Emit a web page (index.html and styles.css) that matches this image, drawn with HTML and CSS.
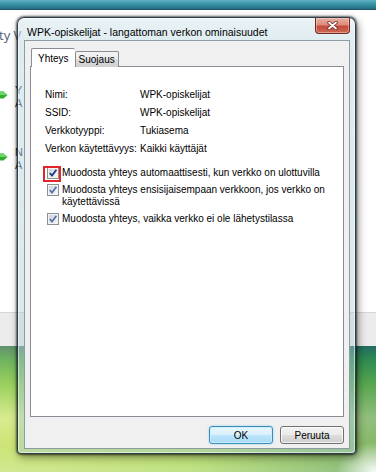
FILE: index.html
```html
<!DOCTYPE html>
<html lang="fi">
<head>
<meta charset="utf-8">
<title>WPK-opiskelijat - langattoman verkon ominaisuudet</title>
<link rel="stylesheet" href="styles.css">
</head>
<body>
<div class="desktop">
  <div class="bgwin">
    <div class="bg-title"></div>
    <div class="bg-body">
      <div class="bg-heading">ty V</div>
      <div class="bg-item">
        <svg class="arrow" width="8" height="10" viewBox="0 0 8 10"><path d="M0 1.5 H3.5 L7.5 5 L3.5 8.5 H0 Z" fill="#2fae2f"/><path d="M0 1.5 H3.5 L7.5 5 H0 Z" fill="#6fd46a"/></svg>
        <div class="bg-item-text"><span>Y</span><span>A</span></div>
      </div>
      <div class="bg-item">
        <svg class="arrow" width="8" height="10" viewBox="0 0 8 10"><path d="M0 1.5 H3.5 L7.5 5 L3.5 8.5 H0 Z" fill="#2fae2f"/><path d="M0 1.5 H3.5 L7.5 5 H0 Z" fill="#6fd46a"/></svg>
        <div class="bg-item-text"><span>N</span><span>A</span></div>
      </div>
    </div>
    <div class="bg-footer"></div>
  </div>

  <div class="dialog">
    <div class="titlebar">
      <span class="title">WPK-opiskelijat - langattoman verkon ominaisuudet</span>
      <div class="close">
        <svg width="11" height="9" viewBox="0 0 11 9"><path d="M2 1.5 L9 7.5 M9 1.5 L2 7.5" stroke="#6a2a22" stroke-width="3.4" stroke-linecap="round"/><path d="M2 1.5 L9 7.5 M9 1.5 L2 7.5" stroke="#ffffff" stroke-width="1.8" stroke-linecap="round"/></svg>
      </div>
    </div>
    <div class="client">
      <div class="tabs">
        <div class="tab active">Yhteys</div>
        <div class="tab">Suojaus</div>
      </div>
      <div class="panel">
        <div class="props">
          <span>Nimi:</span><span>WPK-opiskelijat</span>
          <span>SSID:</span><span>WPK-opiskelijat</span>
          <span>Verkkotyyppi:</span><span>Tukiasema</span>
          <span>Verkon käytettävyys:</span><span>Kaikki käyttäjät</span>
        </div>
        <div class="checks">
          <div class="check">
            <span class="box focus"><svg width="10" height="10" viewBox="0 0 10 10"><path d="M1.8 5 L4 7.6 L8.4 1.8" fill="none" stroke="#1f3c8c" stroke-width="1.9"/></svg><span class="mark"></span></span>
            <span class="label">Muodosta yhteys automaattisesti, kun verkko on ulottuvilla</span>
          </div>
          <div class="check">
            <span class="box"><svg width="10" height="10" viewBox="0 0 10 10"><path d="M1.8 5 L4 7.6 L8.4 1.8" fill="none" stroke="#5670a3" stroke-width="1.7"/></svg></span>
            <span class="label">Muodosta yhteys ensisijaisempaan verkkoon, jos verkko on<br>käytettävissä</span>
          </div>
          <div class="check">
            <span class="box"><svg width="10" height="10" viewBox="0 0 10 10"><path d="M1.8 5 L4 7.6 L8.4 1.8" fill="none" stroke="#5670a3" stroke-width="1.7"/></svg></span>
            <span class="label">Muodosta yhteys, vaikka verkko ei ole lähetystilassa</span>
          </div>
        </div>
      </div>
      <div class="buttons">
        <button class="btn default">OK</button>
        <button class="btn">Peruuta</button>
      </div>
    </div>
  </div>
</div>
</body>
</html>
```

FILE: styles.css
```css
* { box-sizing: border-box; }

html, body {
  margin: 0;
  padding: 0;
}

body {
  width: 376px;
  height: 472px;
  overflow: hidden;
  font-family: "Liberation Sans", Arial, sans-serif;
  font-size: 10px;
  color: #000;
}

.desktop {
  position: relative;
  width: 376px;
  height: 472px;
  overflow: hidden;
  background-color: #7cc447;
  background-image:
    radial-gradient(ellipse 40px 30px at 376px 472px, rgba(255,255,255,0.95), rgba(255,255,255,0)),
    linear-gradient(90deg, rgba(230,240,150,0.3) 0%, rgba(120,200,90,0.1) 50%, rgba(20,110,100,0.35) 100%),
    linear-gradient(180deg, #2a6a5e 0px, #2a6a5e 346px, #3d9a48 360px, #7cc447 385px, #d3e98c 418px, #c2df68 445px, #c9e58e 472px);
}

/* background window */
.bgwin {
  position: absolute;
  left: 0;
  top: 0;
  width: 376px;
  height: 346px;
  display: flex;
  flex-direction: column;
}

.bg-title {
  height: 10px;
  background: linear-gradient(180deg, #5eb3c2 0, #3a93a5 45%, #226f84 100%);
  border-bottom: 1px solid #244f5c;
}

.bg-body {
  flex: 1;
  background: #fff;
  padding-top: 17px;
  display: flex;
  flex-direction: column;
}

.bg-heading {
  font-family: "Open Sans", "Liberation Sans", sans-serif;
  font-size: 13px;
  line-height: 16px;
  color: #4c6078;
  margin-left: -1px;
}

.bg-item {
  display: flex;
  align-items: flex-start;
  gap: 7px;
  margin-top: 41px;
}

.bg-item + .bg-item {
  margin-top: 36px;
}

.arrow {
  margin-top: 6px;
  flex: none;
}

.bg-item-text {
  display: flex;
  flex-direction: column;
  font-size: 11px;
  line-height: 13px;
  color: #1d2a3a;
}

.bg-footer {
  height: 34px;
  background: #ececec;
  border-top: 1px solid #d6d6d6;
}

/* dialog */
.dialog {
  position: absolute;
  left: 17px;
  top: 17px;
  width: 339px;
  height: 437px;
  display: flex;
  flex-direction: column;
  padding: 0 5px 4px 6px;
  border: 1px solid rgba(25, 45, 55, 0.9);
  border-radius: 7px 7px 4px 4px;
  background:
    linear-gradient(180deg, rgba(255,255,255,0.45) 0, rgba(255,255,255,0.1) 22px, rgba(255,255,255,0) 60%),
    rgba(170, 205, 218, 0.42);
  box-shadow:
    inset 0 0 0 1px rgba(255,255,255,0.55),
    0 0 2px 1px rgba(0,0,0,0.55),
    2px 3px 9px rgba(0,0,0,0.45);
}

.titlebar {
  height: 22px;
  display: flex;
  align-items: flex-start;
}

.title {
  padding: 7px 0 0 3px;
  font-size: 10.5px;
  line-height: 14px;
  color: #000;
  white-space: nowrap;
}

.close {
  margin-left: auto;
  width: 35px;
  height: 16px;
  display: flex;
  align-items: center;
  justify-content: center;
  border: 1px solid #6e2a20;
  border-top: none;
  border-radius: 0 0 4px 4px;
  background: linear-gradient(180deg, #e9b1a6 0, #dc8b7d 45%, #c4493b 55%, #cf6a55 100%);
  box-shadow: inset 0 0 0 1px rgba(255,220,210,0.45);
}

.client {
  flex: 1;
  display: flex;
  flex-direction: column;
  padding: 7px 5px 0 5px;
  background: #f0f0f0;
  border: 1px solid #8d9ba3;
}

.tabs {
  display: flex;
  align-items: flex-end;
  height: 19px;
  margin-bottom: -1px;
  position: relative;
  z-index: 1;
}

.tab {
  height: 16px;
  padding: 0 3px;
  line-height: 15px;
  border: 1px solid #898c95;
  border-bottom: none;
  background: linear-gradient(180deg, #f3f3f3 0, #ebebeb 50%, #dddddd 50%, #cfcfcf 100%);
  border-radius: 2px 2px 0 0;
  white-space: nowrap;
}

.tab.active {
  height: 19px;
  margin-left: 1px;
  padding: 0 6px;
  line-height: 20px;
  background: #fff;
  border-right: none;
}

.panel {
  height: 351px;
  background: #fff;
  border: 1px solid #898c95;
  padding: 19px 0 0 14px;
}

.props {
  display: grid;
  grid-template-columns: 95px 1fr;
  line-height: 18px;
}

.checks {
  margin-top: 9px;
  display: flex;
  flex-direction: column;
  gap: 5px;
}

.check {
  display: flex;
  align-items: flex-start;
  line-height: 12px;
}

.box {
  position: relative;
  flex: none;
  width: 12px;
  height: 12px;
  margin: 0 3px 0 2px;
  border: 1px solid #8e8f8f;
  background: linear-gradient(135deg, #c9ced6 0, #e6e8ec 55%, #f7f7f7 100%);
  box-shadow: inset 0 0 0 1px #f4f4f4;
  display: flex;
  align-items: center;
  justify-content: center;
}

.box svg {
  display: block;
}

.box.focus .mark {
  position: absolute;
  left: -5px;
  top: -2px;
  width: 18px;
  height: 16px;
  border: 2px solid #e0252b;
}

.buttons {
  display: flex;
  justify-content: flex-end;
  gap: 7px;
  padding: 9px 0 0 0;
}

.btn {
  width: 64px;
  height: 18px;
  padding: 0;
  font-family: "Liberation Sans", Arial, sans-serif;
  font-size: 10px;
  color: #000;
  border: 1px solid #707070;
  border-radius: 3px;
  background: linear-gradient(180deg, #f2f2f2 0, #ebebeb 50%, #dddddd 50%, #cfcfcf 100%);
  box-shadow: inset 0 0 0 1px rgba(255,255,255,0.75);
}

.btn.default {
  border-color: #3c8db8;
  background: linear-gradient(180deg, #eaf6fd 0, #d9f0fc 50%, #bee6fd 50%, #a7d9f5 100%);
  box-shadow: inset 0 0 0 1px rgba(200,240,255,0.9), 0 0 2px rgba(60,170,220,0.6);
}
```
